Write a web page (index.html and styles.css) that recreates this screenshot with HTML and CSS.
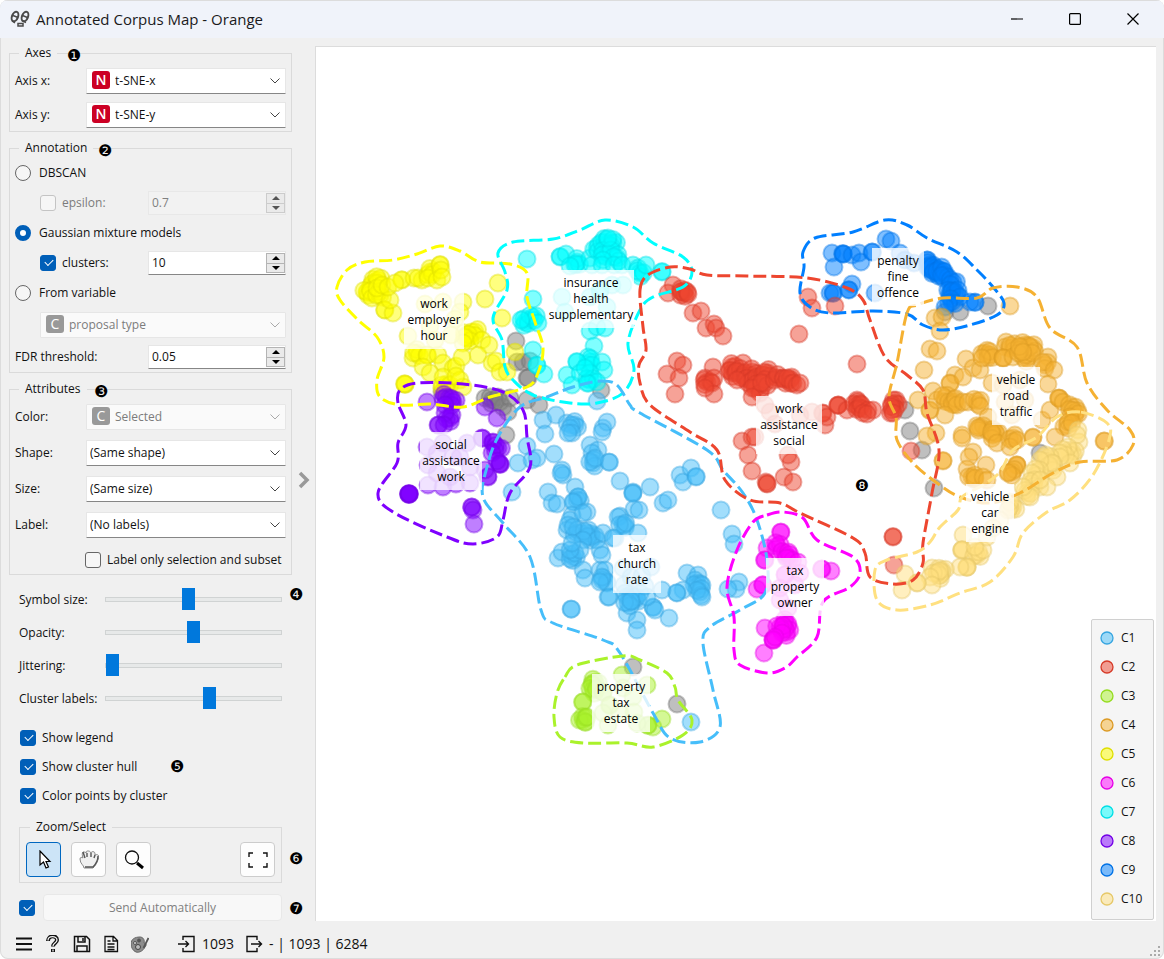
FILE: index.html
```html
<!DOCTYPE html>
<html lang="en">
<head>
<meta charset="utf-8">
<title>Annotated Corpus Map - Orange</title>
<link rel="stylesheet" href="styles.css">
</head>
<body>
<svg class="defs" aria-hidden="true">
  <symbol id="chev" viewBox="0 0 10 6"><path d="M.5.5 5 5 9.500.5" fill="none" stroke="currentColor"/></symbol>
  <symbol id="up" viewBox="0 0 8 4"><path d="M0 4 4 0l4 4z" fill="currentColor"/></symbol>
  <symbol id="down" viewBox="0 0 8 4"><path d="M0 0l4 4 4-4z" fill="currentColor"/></symbol>
</svg>
<div class="window">
  <header class="titlebar">
    <svg class="app-icon" viewBox="0 0 20 18" fill="none" stroke="#4a4a4a" stroke-width="2">
      <ellipse cx="5" cy="6.500" rx="3" ry="5" transform="rotate(22 5 6.500)"/><ellipse cx="15" cy="6.500" rx="3" ry="5" transform="rotate(22 15 6.500)"/>
      <path d="M3 5.500l5 2M12.500 5.500l5 2M2 11l3 2M12 10.500l4 2" stroke-width="1.500"/><path d="M8 13.500h5v2.500H8z" stroke-width="1.500"/>
    </svg>
    <h1>Annotated Corpus Map - Orange</h1>
    <div class="win-buttons">
      <button aria-label="Minimize"><svg viewBox="0 0 12 12"><path d="M0 6h12"/></svg></button>
      <button aria-label="Maximize"><svg viewBox="0 0 12 12"><rect x=".6" y=".6" width="10.800" height="10.800" rx="1"/></svg></button>
      <button aria-label="Close"><svg viewBox="0 0 12 12"><path d="M.5.5l11 11M11.500.5l-11 11"/></svg></button>
    </div>
  </header>
  <main class="main">
    <aside class="sidebar">
      <fieldset class="group axes">
        <legend>Axes</legend><span class="badge b1">❶</span>
        <div class="row"><label for="ax">Axis x:</label><span class="combo with-icon"><select id="ax"><option>t-SNE-x</option></select><i class="var num">N</i><svg class="chev"><use href="#chev"/></svg></span></div>
        <div class="row"><label for="ay">Axis y:</label><span class="combo with-icon"><select id="ay"><option>t-SNE-y</option></select><i class="var num">N</i><svg class="chev"><use href="#chev"/></svg></span></div>
      </fieldset>
      <fieldset class="group annotation">
        <legend>Annotation</legend><span class="badge b2">❷</span>
        <div class="row"><label class="opt"><input type="radio" name="method">DBSCAN</label></div>
        <div class="row sub"><label class="opt off"><input type="checkbox" disabled>epsilon:</label><span class="spin off"><input type="text" value="0.7" aria-label="epsilon" disabled><span class="arrows"><button aria-label="Increase" disabled><svg><use href="#up"/></svg></button><button aria-label="Decrease" disabled><svg><use href="#down"/></svg></button></span></span></div>
        <div class="row"><label class="opt"><input type="radio" name="method" checked>Gaussian mixture models</label></div>
        <div class="row sub"><label class="opt"><input type="checkbox" checked>clusters:</label><span class="spin"><input type="text" value="10" aria-label="clusters"><span class="arrows"><button aria-label="Increase"><svg><use href="#up"/></svg></button><button aria-label="Decrease"><svg><use href="#down"/></svg></button></span></span></div>
        <div class="row"><label class="opt"><input type="radio" name="method">From variable</label></div>
        <div class="row sub tall"><span class="combo with-icon off"><select aria-label="Variable" disabled><option>proposal type</option></select><i class="var cat">C</i><svg class="chev"><use href="#chev"/></svg></span></div>
        <div class="row"><label for="fdr">FDR threshold:</label><span class="spin"><input id="fdr" type="text" value="0.05"><span class="arrows"><button aria-label="Increase"><svg><use href="#up"/></svg></button><button aria-label="Decrease"><svg><use href="#down"/></svg></button></span></span></div>
      </fieldset>
      <fieldset class="group attributes">
        <legend>Attributes</legend><span class="badge b3">❸</span>
        <div class="row"><label for="color">Color:</label><span class="combo with-icon off"><select id="color" disabled><option>Selected</option></select><i class="var cat">C</i><svg class="chev"><use href="#chev"/></svg></span></div>
        <div class="row"><label for="shape">Shape:</label><span class="combo"><select id="shape"><option>(Same shape)</option></select><svg class="chev"><use href="#chev"/></svg></span></div>
        <div class="row"><label for="size">Size:</label><span class="combo"><select id="size"><option>(Same size)</option></select><svg class="chev"><use href="#chev"/></svg></span></div>
        <div class="row"><label for="lab">Label:</label><span class="combo"><select id="lab"><option>(No labels)</option></select><svg class="chev"><use href="#chev"/></svg></span></div>
        <div class="row only"><label class="opt"><input type="checkbox">Label only selection and subset</label></div>
      </fieldset>
      <section class="sliders">
        <span class="badge b4">❹</span>
        <div class="row"><label for="s1">Symbol size:</label><input id="s1" type="range" value="47"></div>
        <div class="row"><label for="s2">Opacity:</label><input id="s2" type="range" value="50"></div>
        <div class="row"><label for="s3">Jittering:</label><input id="s3" type="range" value="0"></div>
        <div class="row"><label for="s4">Cluster labels:</label><input id="s4" type="range" value="60"></div>
      </section>
      <section class="checks">
        <span class="badge b5">❺</span>
        <label class="opt"><input type="checkbox" checked>Show legend</label>
        <label class="opt"><input type="checkbox" checked>Show cluster hull</label>
        <label class="opt"><input type="checkbox" checked>Color points by cluster</label>
      </section>
      <fieldset class="group zoom">
        <legend>Zoom/Select</legend><span class="badge b6">❻</span>
        <div class="tools">
          <button class="tool on" aria-label="Select"><svg viewBox="0 0 20 20"><path d="M6 1v14l3.500-3 2.500 6 2.500-1-2.500-5.500h4z" fill="#fff" stroke="#000" stroke-width="1.200"/></svg></button>
          <button class="tool" aria-label="Pan"><svg viewBox="0 0 20 20"><path d="M5 18c0-3-4-4-4-9 0-2 2-2 3-1-1-3-1-5 0-6 1 0 3 0 3 1 0-2 1-2 2-2s2 0 3 2c0-1 2-2 3-1 1 0 1 2 1 3 2-1 3 0 4 1-1 4-2 8-6 12z" fill="#f0f0f0" stroke="#888"/><path d="M4 2l2 6M8 3v4M12 3v4M16 5l-1 3M19 6q0 6-5 11H6" fill="none" stroke="#555" stroke-width="1.400"/></svg></button>
          <button class="tool" aria-label="Zoom"><svg viewBox="0 0 20 20"><circle cx="8" cy="7.500" r="6.500" fill="#fff" stroke="#111" stroke-width="1.300"/><path d="M13 13l6 5" stroke="#000" stroke-width="3"/></svg></button>
          <button class="tool fit" aria-label="Zoom to fit"><svg viewBox="0 0 20 20"><path d="M1 7V3h4M15 3h4v4M19 13v4h-4M5 17H1v-4" fill="none" stroke="#111" stroke-width="1.400"/></svg></button>
        </div>
      </fieldset>
      <div class="send"><span class="badge b7">❼</span><input type="checkbox" aria-label="Send automatically" checked><button disabled>Send Automatically</button></div>
    </aside>
    <button class="collapse" aria-label="Collapse panel"><svg viewBox="0 0 12 18"><path d="M2 2l7 7-7 7" fill="none" stroke="#999" stroke-width="3.500"/></svg></button>
    <section class="plot">
      <svg id="map" viewBox="316 47 840 874" role="img" aria-label="Corpus map"></svg>
      <ul id="legend" class="legend"></ul>
    </section>
  </main>
  <footer class="status">
    <button aria-label="Menu"><svg viewBox="0 0 18 18"><path d="M1 3.500h16M1 9h16M1 14.500h16" stroke-width="2.200"/></svg></button>
    <button aria-label="Help"><svg viewBox="0 0 18 18"><path d="M4 6c0-6 9-6 9-1 0 3-4 3-4 6.500M9 14v3" stroke-width="4"/><path d="M4 5.500c0-5 9-5 9-.5 0 3-4 3-4 6M9 14.500v2" stroke="#f0f0f0" stroke-width="1.300"/></svg></button>
    <button aria-label="Save"><svg viewBox="0 0 18 18"><path d="M1.500 1.500h12l3 3v12h-15zM5 2v5h7V2M4 16v-5h10v5M10 3v3"/></svg></button>
    <button aria-label="Report"><svg viewBox="0 0 18 18"><path d="M3 1.500h8.500l4 4v11H3zM11 2v4h4M5.500 6h3M5.500 9h7M5.500 12h7M5.500 14.500h7" stroke-width="1.300"/></svg></button>
    <button aria-label="Visual settings"><svg viewBox="0 0 18 18"><path d="M0 9C0 4 4 2 9 2c3 0 5 3 4 6 2 0 3 2 1 4-2 4-6 6-9 5S0 12 0 9z" fill="#8c8c8c" stroke="#666" stroke-width="1"/><circle cx="4" cy="8" r="1.500" fill="#ddd" stroke="#555" stroke-width="1"/><circle cx="8" cy="5.500" r="1.500" fill="#555" stroke="#555" stroke-width="1"/><circle cx="7" cy="12" r="2.500" fill="#bbb" stroke="#444" stroke-width="1"/><path d="M17.500 3l-5 10" stroke="#555" stroke-width="1.800"/></svg></button>
    <span class="io first"><svg viewBox="0 0 18 18"><path d="M5 5V1.500h11v15H5V13M0 9h10M7.500 6l3 3-3 3" stroke-width="1.400"/></svg>1093</span>
    <span class="io"><svg viewBox="0 0 18 18"><path d="M12 5V1.500H2v15h10V13M6 9h10M13.500 6l3 3-3 3" stroke-width="1.400"/></svg>- | 1093 | 6284</span>
    <svg class="grip" viewBox="0 0 12 12"><path d="M9 1h2v2H9zM5 5h2v2H5zM9 5h2v2H9zM1 9h2v2H1zM5 9h2v2H5zM9 9h2v2H9z" fill="#aaa"/></svg>
  </footer>
</div>
<script src="map.js"></script>
</body>
</html>
```

FILE: styles.css
```css
* { box-sizing: border-box; }
body { margin: 0; background: #fff; font-family: "Open Sans", "Noto Sans", sans-serif; font-size: 12px; line-height: 16px; color: #111; }
button, input, select { font: inherit; color: inherit; margin: 0; }
button { padding: 0; border: 0; background: none; }
.defs { position: absolute; width: 0; height: 0; }
.window { min-height: 100vh; display: flex; flex-direction: column; background: #f0f0f0; border-radius: 8px; box-shadow: inset 0 0 0 1px #dcdcdc; overflow: hidden; }
.titlebar { display: flex; align-items: center; height: 38px; padding: 0 2px 0 10px; gap: 6px; background: #f0f3fa; box-shadow: inset 0 1px 0 #dcdcdc; }
.titlebar h1 { margin: 0; font-size: 15px; font-weight: 400; line-height: 20px; color: #1a1a1a; }
.app-icon { width: 20px; height: 18px; }
.win-buttons { margin-left: auto; display: flex; }
.win-buttons button { width: 58px; height: 38px; }
.win-buttons svg { width: 12px; height: 12px; fill: none; stroke: #000; stroke-width: 1.2; display: block; margin: auto; }
.main { flex: 1; display: flex; padding-right: 8px; }
.sidebar { width: 283px; margin-left: 9px; padding-top: 7px; display: flex; flex-direction: column; gap: 8px; flex-shrink: 0; }

.group { position: relative; margin: 0; min-width: 0; border: 1px solid #dadada; padding: 0 5px; display: flex; flex-direction: column; }
.group legend { margin-left: 4px; padding: 0 6px; height: 16px; }
.row { display: flex; align-items: center; min-height: 24px; }
.row > label:first-child { white-space: nowrap; }
.axes { padding: 7px 5px 3px; gap: 8px; }
.annotation { padding: 5px 5px 3px; gap: 6px; }
.attributes { padding: 7px 5px 2px; gap: 10px; }
.axes .row > label, .attributes .row > label:not(.opt) { width: 71px; }
.sub { padding-left: 25px; }
.annotation .tall { min-height: 28px; }
.only { padding-left: 70px; }

.badge { position: absolute; font-family: "DejaVu Sans", sans-serif; font-size: 16px; line-height: 16px; color: #000; }
.b1 { left: 57px; top: -13px; }
.b2 { left: 88px; top: -13px; }
.b3 { left: 84px; top: -13px; }
.b4 { left: 280px; top: 4px; }
.b5 { left: 161px; top: 36px; }
.b6 { left: 269px; top: 16px; }
.b7 { left: 280px; top: 7px; }

.combo { position: relative; flex: 1; height: 26px; }
.combo select { appearance: none; width: 100%; height: 26px; padding: 0 3px; border: 1px solid #e6e6e6; border-bottom-color: #868686; border-radius: 1px; background: #fff; color: #111; opacity: 1; }
.combo.with-icon select { padding-left: 28px; }
.combo.off select { background: #fafafa; border-bottom-color: #e6e6e6; color: #7c7c7c; }
.chev { position: absolute; right: 6px; top: 10px; width: 10px; height: 6px; color: #444; pointer-events: none; }
.off .chev { color: #aaa; }
.var { position: absolute; left: 6px; top: 3px; width: 18px; height: 18px; border-radius: 3px; color: #fff; font-style: normal; font-size: 14px; line-height: 18px; text-align: center; pointer-events: none; }
.num { background: #cc0024; font-weight: 600; }
.cat { background: #999; }

.opt { display: inline-flex; align-items: center; gap: 8px; }
.sub .opt, .only .opt { gap: 6px; }
input[type=checkbox], input[type=radio] { appearance: none; width: 16px; height: 16px; border: 1px solid #666; background: #f6f6f6; flex-shrink: 0; }
input[type=checkbox] { position: relative; border-radius: 3px; }
input[type=radio] { border-radius: 50%; }
input[type=radio]:checked { border: 5px solid #005fb8; background: #fff; }
input[type=checkbox]:checked { background: #005fb8; border-color: #005fb8; }
input[type=checkbox]:checked::after { content: ""; position: absolute; left: 4px; top: 3px; width: 7px; height: 4px; border: solid #fff; border-width: 0 0 1px 1px; transform: rotate(-45deg); }
input[type=checkbox]:disabled { border-color: #c4c4c4; }
.opt.off { color: #7c7c7c; }
.spin { display: flex; width: 138px; height: 24px; margin-left: auto; background: #fff; border: 1px solid #e6e6e6; border-bottom-color: #868686; }
.spin input { flex: 1; min-width: 0; padding: 0 3px; border: 0; background: none; }
.spin.off { background: #f2f2f2; border-color: #e8e8e8; color: #808080; }
.arrows { width: 19px; height: 20px; margin: 1px 0 0; display: flex; flex-direction: column; border: 1px solid #b4b4b4; background: #eaeaea; }
.arrows button { flex: 1; display: flex; align-items: center; justify-content: center; color: #000; }
.arrows button + button { border-top: 1px solid #b4b4b4; }
.arrows svg { width: 8px; height: 4px; }
.off .arrows button { color: #555; }
.off .arrows, .off .arrows button { border-color: #ccc; }

.sliders { position: relative; padding: 0 10px; }
.sliders .row { height: 33px; }
.sliders label { width: 86px; }
input[type=range] { appearance: none; flex: 1; min-width: 0; height: 22px; background: none; }
input[type=range]::-webkit-slider-runnable-track { height: 5px; background: #e7e9e9; border: 1px solid #d0d3d3; }
input[type=range]::-webkit-slider-thumb { appearance: none; width: 13px; height: 22px; margin-top: -10px; background: #0078dc; border: 0; }
.checks { position: relative; display: flex; flex-direction: column; align-items: flex-start; padding: 0 11px; }
.checks .opt { height: 29px; gap: 6px; }
.zoom { margin: 1px 10px 0; padding: 7px 6px 5px; }
.tools { display: flex; gap: 10px; }
.tool { width: 35px; height: 35px; border: 1px solid #ccc; border-radius: 4px; background: #fdfdfd; }
.tool.on { background: #cce4f7; border-color: #0067c0; }
.tool.fit { margin-left: auto; }
.tool svg { display: block; width: 20px; height: 20px; margin: auto; }
.send { position: relative; display: flex; align-items: center; gap: 8px; margin-top: 3px; padding: 0 10px; height: 27px; }
.send button { flex: 1; height: 27px; border: 1px solid #e8e8e8; border-radius: 4px; background: #f8f8f8; color: #808080; }
.collapse { width: 23px; flex-shrink: 0; display: flex; align-items: center; justify-content: center; }
.collapse svg { width: 12px; height: 18px; }

.plot { position: relative; flex: 1; min-width: 0; margin-top: 8px; background: #fff; border: solid #dcdcdc; border-width: 1px 0 0 1px; }
.plot #map { position: absolute; left: 0; top: 0; width: 100%; height: 100%; }
.dots circle { fill-opacity: .5; stroke-opacity: .4; stroke-width: 2; }
.hull { fill: none; stroke-width: 3; stroke-dasharray: 13 5; }
.tag rect { fill: #fff; fill-opacity: .78; }
.tag text { text-anchor: middle; font-size: 12px; fill: #000; }
.mark { font-family: "DejaVu Sans", sans-serif; font-size: 16px; text-anchor: middle; }
.legend { position: absolute; right: 2px; bottom: 1px; width: 63px; margin: 0; padding: 3px 0 6px 8px; list-style: none; background: #f5f5f5; border: 1px solid #d0d0d0; border-radius: 2px; }
.legend li { display: flex; align-items: center; gap: 7px; height: 29px; }
.legend svg { width: 14px; height: 14px; }

.status { position: relative; display: flex; align-items: center; height: 38px; padding: 8px 15px 0; gap: 11px; font-size: 14px; line-height: 20px; }
.status button, .status .io svg { width: 18px; height: 18px; }
.status svg { display: block; width: 18px; height: 18px; fill: none; stroke: #111; stroke-width: 1.5; }
.io { display: flex; align-items: center; gap: 6px; white-space: pre; }
.io.first { margin-left: 18px; }
.status .grip { position: absolute; right: 3px; bottom: 2px; width: 12px; height: 12px; stroke: none; }
```

FILE: map.js
```js
// Each point is "x,y" or "x,y,n", where n documents share a spot.
const clusters = [
  { name: "", color: "#7f7f7f", edge: "#707070",
    dots: "516,341 517,362 523,362 530,361 527,378 442,392 485,398 492,400,2 498,397 503,407 500,402 510,398 508,412 527,400 539,405 528,378 506,435 601,390 988,306 960,312 945,312 905,410 910,431 922,450 934,488 1040,453 633,667 677,704" },
  { name: "C1", color: "#46befa", edge: "#36a5e0",
    dots: "597,401 543,420 556,415 545,434 567,423 575,425,2 570,428 572,433 568,433 603,428 607,422 602,432 527,446 518,463 532,460 537,458 554,454 590,445 598,450 592,453 593,463,2 609,462,2 595,458 562,470 563,475 561,473 512,492 548,492 552,503 557,504 575,487 578,497 577,500,2 573,502 587,512 620,481 633,492 620,516 625,525 572,515 570,520 567,530 568,525 577,533,2 583,513 592,537,3 587,533,2 597,540 603,533 573,527 583,540 600,550 602,555 558,558 562,552 573,557,3 575,553 580,550 570,550 572,543 583,570 585,578 600,570 603,578 605,570 602,580 607,583 608,597 615,538 571,609,2 633,493,2 650,487 618,517 623,525,2 634,509 639,510 638,533 613,538 663,503 668,500 680,475 683,482 691,468 696,477,2 721,510 732,534 734,544 739,582 736,589 728,589 687,573 698,575 697,583,3 702,585 700,592,2 702,597 683,590 677,593,2 662,590 653,607,2 655,610 669,618 627,613 637,620 637,630 630,598,3 635,600,2 640,593 647,597 625,593 628,603,2 609,597 607,582 602,577 600,582 691,722 623,568 631,577 642,576 651,567 645,586 624,585" },
  { name: "C3", color: "#aaf22b", edge: "#95dc20",
    dots: "622,675 595,682,2 592,685 593,690,2 583,702,2 583,720,3 585,722 587,717 647,685 662,719 653,727 648,725,2 608,725 637,723 603,692,2 610,705,2 623,688 633,697 620,713 634,712 603,713" },
  { name: "C5", color: "#ffff00", edge: "#dfdf00",
    dots: "370,290,2 375,282,2 378,280,2 367,292,2 372,298 380,295,2 377,288 382,285 385,310,2 393,313 390,300 388,287 402,280,2 395,283 414,278 422,280 418,278 430,272,3 428,278 437,280 440,265,2 441,270 442,277 498,283 485,299 502,318 463,302 460,312 408,336 467,335,2 475,332,2 468,338,2 482,340 489,345 478,355 492,363 496,361 500,372 507,372 515,352 463,343 413,358 417,353,2 427,355,2 438,355 443,363 423,367 430,373 453,368 456,366 462,357 405,384,3 445,387,3 443,377 450,385 460,380 463,387 456,376 425,304 443,302 430,326 451,335 435,340 455,319" },
  { name: "C8", color: "#7f00ff", edge: "#7200e6",
    dots: "427,402 446,397,2 453,402,2 445,405 450,418,2 445,413 438,425,2 444,425 497,418 485,407 482,438,2 493,442,2 498,448,2 492,453 500,464,3 497,461 488,477,2 485,470 409,494,6 472,507,2 473,510 474,524 428,485 443,487 456,484 470,483 427,447 428,465 443,443 453,457 467,443 470,467 437,473 450,477 460,457 437,453" },
  { name: "C7", color: "#00ffff", edge: "#00dfe6",
    dots: "527,259 533,299 525,322,3 533,317,2 521,320 538,323 533,350 537,365,2 544,374 560,257,2 566,254 577,262,2 576,264 570,266 590,258 597,248,2 605,242,3 613,243,2 605,253,3 611,250 617,258,2 603,260 608,238 592,265 602,265 614,265 622,265 633,265 638,268 640,273,2 646,265 662,272,2 590,331 597,327 605,328 594,346 588,357 590,362,2 577,362,2 602,362 604,370 567,375 572,385 580,373 590,373 590,380,2 597,382 587,383 585,368 562,297 565,312 600,290,2 623,285 607,307 590,297 612,285" },
  { name: "C9", color: "#007fff", edge: "#0072e6",
    dots: "832,253 843,254,3 852,255 859,253 861,262 834,267 872,252,2 886,239 891,241 830,293 833,293,2 852,284 849,290,2 875,293 900,253 905,260 914,263 927,260,2 930,265,3 933,270,3 937,273,2 940,270,2 945,275,3 953,282,2 950,293,2 955,292,2 960,297 952,302,2 945,307 975,302,2 970,302" },
  { name: "C2", color: "#ed462f", edge: "#d63a28",
    dots: "673,285 668,293 682,292,2 684,293,2 688,294 693,313 701,311 706,328 714,324 716,328 723,336 799,334 857,364 808,297 812,308 835,306 677,361 683,365 667,374 679,378 675,394 713,367 705,378 707,382,2 714,378 712,383 714,394 705,388 732,367,2 732,373,2 743,363 740,372,2 744,376,3 753,372,2 750,380,2 755,383,2 760,377,2 768,373,3 758,387,2 752,388 760,393 752,397 765,383,2 777,378,2 783,378 787,380,2 790,380,2 793,383 797,385 800,383 737,380 742,441 752,437 755,437 748,455 752,471 766,482 767,484,2 784,477 793,482 791,462 788,455 825,425 823,413,2 827,417 838,405,3 847,410 857,400 857,405,3 860,408,2 868,410 863,413 873,410 867,414 896,400 895,403,2 892,410,2 893,413 911,451 893,537,2 894,565 765,405 770,412 775,424 800,415 812,412" },
  { name: "C6", color: "#ff00ff", edge: "#e600e6",
    dots: "781,532,2 767,548 777,546,2 785,553,2 765,560,2 790,558,2 798,562 757,589 763,585,2 765,628 764,653 785,623,2 788,624 787,632,2 780,627,2 782,633 773,640,3 775,637 831,571 822,569,2 785,575,2 795,585 780,600 788,608 800,573 780,588" },
  { name: "C4", color: "#f5b132", edge: "#dc9a24",
    dots: "1010,306 935,318 942,317 940,331 930,349 937,351 924,370 966,359 973,368 980,370 985,353,2 990,355,2 982,358 1006,342 1005,347 1013,347,3 1003,358,3 1013,357 1025,345,3 1027,358,3 1033,348,2 1032,353 1020,350,2 1048,357 1045,365,2 1054,370 1048,384 992,383 955,375 950,383,2 963,377 933,391 918,400 930,410,2 937,400 945,398,2 952,402,2 955,402,2 963,402 968,402 977,401,2 980,406 945,415 988,417 987,430 980,427,2 978,428 962,435 962,438 995,432,2 993,435,2 997,443 1013,438,2 1010,447 1017,440 1033,437,2 1042,420 1050,410 1059,398,3 1063,402 1072,407,2 1075,413,3 1070,417 1067,425,2 1072,423 1055,437 936,433 927,436 943,461,2 973,452 969,457 967,469 986,465 972,477,2 975,478 983,477 987,480 1017,465,3 1012,472,2 1008,473 1104,441,2 1003,385 1020,380 1005,402 1025,400 1012,415" },
  { name: "C10", color: "#ffe080", edge: "#e6c868",
    dots: "1078,430 1079,442 1077,435 1072,452,3 1068,447 1063,453,2 1070,463 1060,457 1047,458,3 1052,467,2 1057,477 1052,463 1040,460 1037,472,2 1032,473 1033,483,3 1040,487 1047,487 1027,493,2 1030,497 1040,480 1023,487 1013,507,3 1010,502 1008,510 963,535 962,550,3 977,555,3 967,567,3 960,567 983,550 975,547 987,537 932,568 942,570,2 940,575,2 937,573,2 930,577 932,585 917,583,2 905,574 902,590 1000,520 993,528" }
];

const hulls = {
  C5: "337,287 347,270 365,262 393,260 417,254 440,246 460,251 480,262 510,264 527,273 527,297 535,322 543,348 538,373 527,387 490,397 463,407 430,404 400,405 380,397 377,380 384,357 377,337 358,320 340,300",
  C7: "498,253 513,242 553,239 580,230 605,220 633,227 653,243 683,257 692,272 683,287 653,297 640,310 628,343 634,370 623,393 597,403 570,403 533,395 513,380 505,367 502,340 493,318 507,290 505,272",
  C1: "600,381 617,385 630,405 640,413 707,450 723,470 743,493 757,520 767,560 765,593 740,610 710,627 703,643 713,690 720,727 700,742 670,738 653,713 620,653 603,640 553,623 541,610 530,557 503,523 483,497 487,467 498,437 520,407 547,397 573,387",
  C2: "640,290 648,275 670,267 690,269 707,275 747,276 807,278 847,288 863,300 870,320 885,357 907,375 923,390 927,413 939,450 932,493 923,543 923,563 913,580 893,584 870,577 865,553 853,538 800,513 780,503 750,500 725,480 717,450 690,432 650,405 640,383 639,365 646,350 643,327",
  C8: "398,403 400,390 417,383 463,384 503,392 523,410 527,437 530,467 510,493 503,520 497,537 473,544 447,537 393,512 378,493 397,463 398,443 406,425",
  C3: "565,677 577,665 623,656 640,660 667,673 675,687 678,700 692,720 683,735 653,747 627,743 583,743 560,737 554,717 557,693",
  C6: "767,515 783,512 803,518 817,540 853,557 860,573 850,587 823,602 817,637 797,657 785,668 767,673 740,665 734,650 734,617 727,587 737,550 753,522",
  C9: "803,252 815,238 853,232 885,220 907,225 927,238 957,252 977,270 993,287 1004,303 997,315 970,325 943,330 923,325 907,314 873,311 830,313 810,307 800,293 804,267",
  C4: "907,313 917,305 943,298 977,298 993,288 1017,287 1037,297 1050,328 1077,347 1087,383 1107,410 1130,430 1133,445 1117,460 1080,462 1053,473 1020,493 990,503 960,497 937,483 913,463 897,440 896,417 889,397 897,363",
  C10: "1080,412 1057,417 1037,437 1013,450 1000,472 983,485 962,497 958,510 940,527 930,542 917,552 887,560 875,570 877,600 897,610 930,605 960,593 990,582 1013,557 1023,533 1047,512 1070,500 1093,475 1109,440 1107,423"
};

const tags = [
  [434, 320, 60, "work", "employer", "hour"],
  [591, 299, 86, "insurance", "health", "supplementary"],
  [898, 277, 52, "penalty", "fine", "offence"],
  [1016, 396, 48, "vehicle", "road", "traffic"],
  [789, 425, 66, "work", "assistance", "social"],
  [451, 461, 62, "social", "assistance", "work"],
  [637, 564, 48, "tax", "church", "rate"],
  [795, 587, 58, "tax", "property", "owner"],
  [621, 703, 58, "property", "tax", "estate"],
  [990, 513, 48, "vehicle", "car", "engine"]
];

const map = document.getElementById("map");
const NS = "http://www.w3.org/2000/svg";
function add(parent, tag, attrs, text) {
  const el = document.createElementNS(NS, tag);
  for (const k in attrs) el.setAttribute(k, attrs[k]);
  if (text) el.textContent = text;
  parent.appendChild(el);
  return el;
}
const parse = s => s.split(" ").map(p => p.split(",").map(Number));

// Closed Catmull-Rom curve through the hull vertices.
function smooth(p) {
  const n = p.length;
  let d = "M" + p[0];
  for (let i = 0; i < n; i++) {
    const a = p[(i + n - 1) % n], b = p[i], c = p[(i + 1) % n], e = p[(i + 2) % n];
    d += ` C${b[0] + (c[0] - a[0]) / 6},${b[1] + (c[1] - a[1]) / 6} ${c[0] - (e[0] - b[0]) / 6},${c[1] - (e[1] - b[1]) / 6} ${c[0]},${c[1]}`;
  }
  return d + "Z";
}

// Documents that share a crowded spot fan out a little around it.
for (const c of clusters) {
  const g = add(map, "g", { class: "dots", fill: c.color, stroke: c.edge });
  const pts = parse(c.dots);
  pts.forEach(([x, y, n = 1], k) => {
    const near = pts.filter(p => Math.hypot(p[0] - x, p[1] - y) < 11).length - 1;
    const crowded = n > 1 && near > 1;
    const total = crowded ? n + 2 : n;
    for (let i = 0; i < total; i++) {
      const r = i === 0 ? 0 : crowded ? 3.5 : 0.5;
      const t = k * 1.7 + i * 2.4;
      add(g, "circle", { cx: x + r * Math.cos(t), cy: y + r * Math.sin(t), r: 8.5 });
    }
  });
}
const byName = Object.fromEntries(clusters.map(c => [c.name, c]));
for (const name in hulls)
  add(map, "path", { class: "hull", stroke: byName[name].color, d: smooth(parse(hulls[name])) });
for (const [x, y, w, ...lines] of tags) {
  const g = add(map, "g", { class: "tag" });
  add(g, "rect", { x: x - w / 2, y: y - 29, width: w, height: 58 });
  lines.forEach((t, i) => add(g, "text", { x: x, y: y - 12 + i * 16 }, t));
}
add(map, "text", { class: "mark", x: 862, y: 491 }, "❽");

const legend = document.getElementById("legend");
for (let i = 1; i <= 10; i++) {
  const c = byName["C" + i];
  const li = document.createElement("li");
  const s = add(li, "svg", { viewBox: "0 0 14 14" });
  add(s, "circle", { cx: 7, cy: 7, r: 6, fill: c.color, "fill-opacity": .5, stroke: c.edge, "stroke-width": 1.3 });
  li.append(c.name);
  legend.appendChild(li);
}
```
